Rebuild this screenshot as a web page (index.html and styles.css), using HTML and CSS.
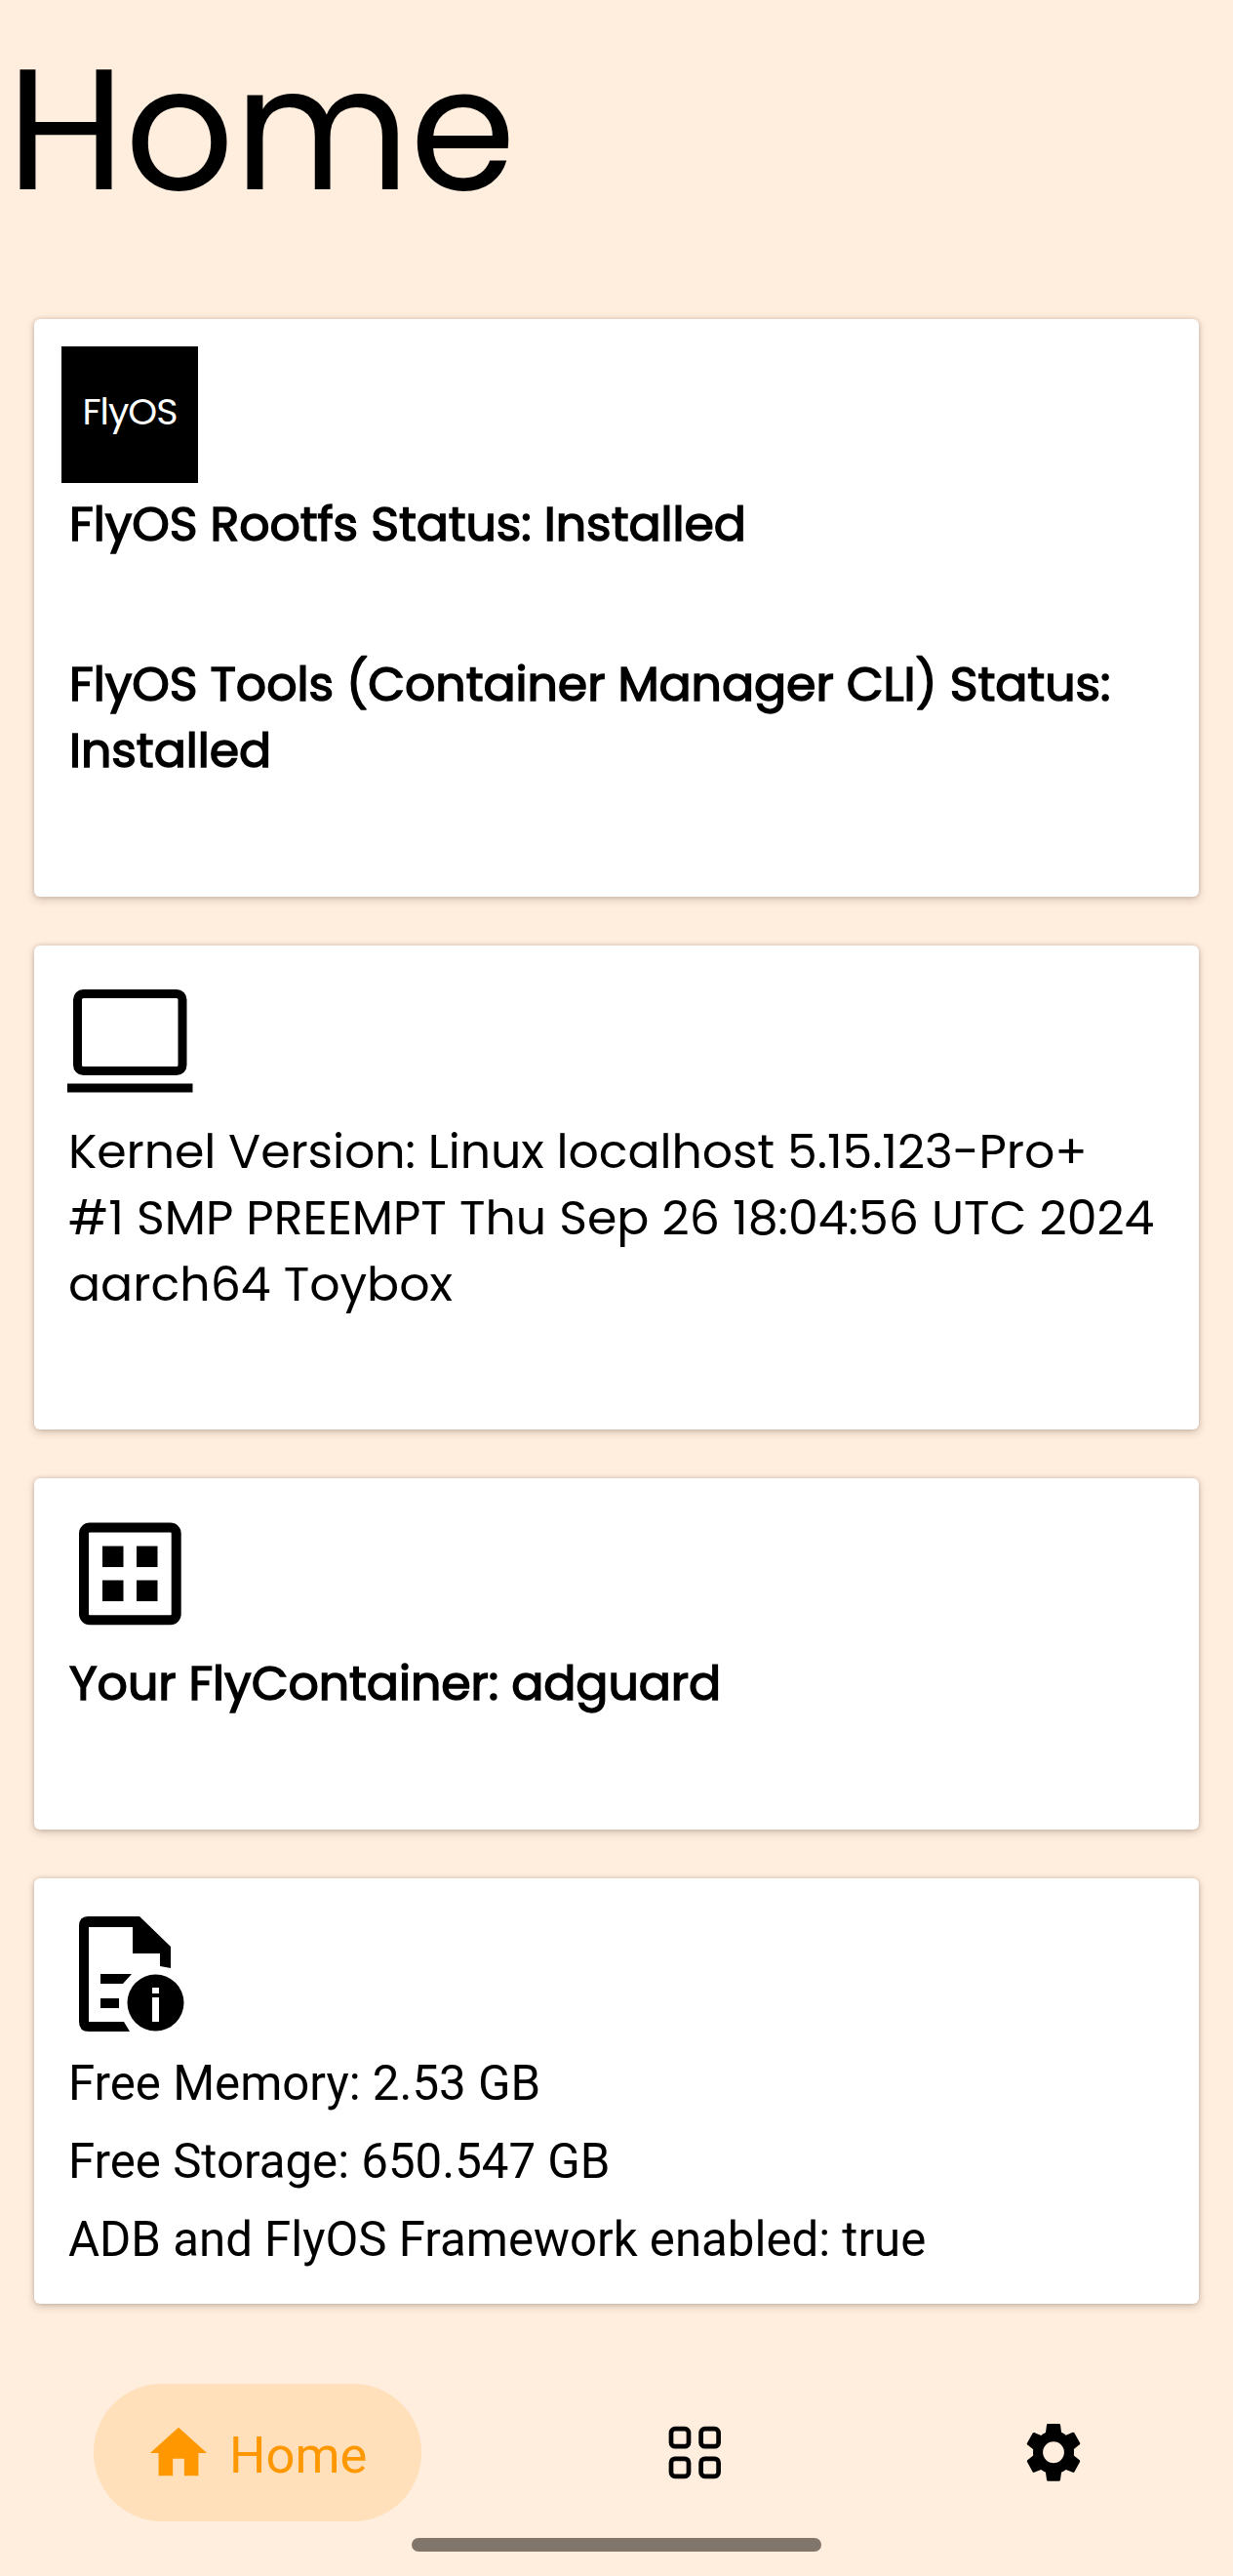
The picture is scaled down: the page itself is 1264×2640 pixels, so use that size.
FILE: index.html
```html
<!DOCTYPE html>
<html lang="en">
<head>
<meta charset="utf-8">
<title>Home</title>
<link rel="stylesheet" href="styles.css">
</head>
<body>
<main class="screen">
  <h1 class="title">Home</h1>
  <section class="card card-status">
    <div class="logo"><span>FlyOS</span></div>
    <p class="text strong rootfs">FlyOS Rootfs Status: Installed</p>
    <p class="text strong tools">FlyOS Tools (Container Manager CLI) Status:<br>Installed</p>
  </section>
  <section class="card card-kernel">
    <svg class="icon" viewBox="0 8.500 140 140"><rect x="16.500" y="30" width="107.500" height="79" rx="6" fill="none" stroke="#000" stroke-width="9"/><path d="M6 122h128.500v9H6z"/></svg>
    <p class="text kernel"><span class="k1">Kernel Version: Linux localhost 5.15.123-Pro+</span><br>#1 SMP PREEMPT Thu Sep 26 18:04:56 UTC 2024<br>aarch64 Toybox</p>
  </section>
  <section class="card card-container">
    <svg class="icon" viewBox="0 9 140 140"><rect x="23" y="31.500" width="94.700" height="94.700" rx="6" fill="none" stroke="#000" stroke-width="10"/><path d="M42 50.500h21.500V72H42zM77 50.500h21.500V72H77zM42 85.500h21.500V107H42zM77 85.500h21.500V107H77z"/></svg>
    <p class="text strong container">Your FlyContainer: adguard</p>
  </section>
  <section class="card card-info">
    <svg class="icon" viewBox="0 9 140 140"><path d="M27 20H80L112 51V73L101 71V58H73V31H28V128H64L70 138H28Q18 138 18 128V30Q18 20 27 20Z"/><path d="M40 79H72L63 89H40zM40 104H59V114H40z"/><circle cx="96.500" cy="108.500" r="29"/><path d="M93 93h7v6h-7zM93 103h7v25h-7z" fill="#fff"/></svg>
    <div class="info">
      <p>Free Memory: 2.53 GB</p>
      <p>Free Storage: 650.547 GB</p>
      <p>ADB and FlyOS Framework enabled: true</p>
    </div>
  </section>
  <nav class="nav">
    <a class="tab active"><svg class="tab-icon home-icon" viewBox="0 0 24 24"><path d="M10 20v-6h4v6h5v-8h3L12 3 2 12h3v8z"/></svg><span>Home</span></a>
    <a class="tab"><svg class="tab-icon" viewBox="0.700 0.500 70 70"><g fill="none" stroke="#000" stroke-width="4.700"><rect x="10.700" y="10.700" width="18" height="18" rx="4"/><rect x="41.300" y="10.700" width="18" height="18" rx="4"/><rect x="10.700" y="41.300" width="18" height="18" rx="4"/><rect x="41.300" y="41.300" width="18" height="18" rx="4"/></g></svg></a>
    <a class="tab"><svg class="tab-icon" viewBox="0 0 24 24"><path transform="translate(.14 -.25) scale(.96 1)" fill-rule="evenodd" d="M12 15.750a3.900 3.750 0 1 1 0-7.500 3.900 3.750 0 0 1 0 7.500zm7.430-2.680c.04-.32.070-.64.070-1.070s-.03-.75-.07-1.080l2.110-1.630c.19-.15.24-.42.12-.64l-2-3.460c-.12-.22-.39-.31-.61-.22l-2.490 1c-.52-.39-1.060-.73-1.690-.98l-.37-2.650A.506.506 0 0 0 14 2h-4c-.25 0-.46.180-.5.420l-.37 2.650c-.63.250-1.170.590-1.690.98l-2.490-1c-.22-.09-.49 0-.61.220l-2 3.460c-.13.220-.07.490.12.640l2.110 1.630c-.04.330-.07.650-.07 1s.03.750.070 1.070l-2.110 1.660c-.19.150-.25.420-.12.640l2 3.460c.12.220.39.300.61.220l2.490-1.010c.52.400 1.060.740 1.690.990l.37 2.650c.04.240.25.420.5.420h4c.25 0 .46-.18.5-.42l.37-2.650c.63-.26 1.170-.59 1.690-.99l2.490 1.010c.22.080.49 0 .61-.22l2-3.460c.12-.22.070-.49-.12-.64z"/></svg></a>
  </nav>
  <div class="handle"></div>
</main>
</body>
</html>
```
FILE: styles.css
```css
* { box-sizing: border-box; }
body { margin: 0; background: #ffedde; color: #000; }
.screen { height: 2640px; display: flex; flex-direction: column; overflow: hidden; }
h1, p { margin: 0; }
.title { font: 400 175px/200px Poppins, Inter, sans-serif; height: 294px; padding: 33px 0 0 7px; margin-bottom: 33px; white-space: nowrap; }
.card { margin: 0 35px 50px; padding: 28px; background: #fff; border-radius: 6px; box-shadow: 0 3px 9px rgba(70, 50, 30, .22), 0 0 4px rgba(70, 50, 30, .2); flex: none; }
.card-status { height: 592px; }
.card-kernel { height: 496px; }
.card-container { height: 360px; }
.card-info { height: 436px; margin-bottom: 0; }
.logo { width: 140px; height: 140px; background: #000; color: #fff; display: flex; align-items: center; justify-content: center; padding-bottom: 6px; font: 400 38px/50px Poppins, Inter, sans-serif; letter-spacing: -1px; }
.icon { display: block; width: 140px; height: 140px; }
.text { font: 400 49px/68px Poppins, Inter, sans-serif; padding: 9px 0 0 7px; white-space: nowrap; }
.strong { padding: 8px 0 0 8px; letter-spacing: -.05px; -webkit-text-stroke: 1.5px #000; }
.tools { padding-top: 96px; }
.k1 { letter-spacing: -.11px; }
.info { font: 400 49.2px/80px Roboto, sans-serif; padding: 2px 0 0 7px; white-space: nowrap; }
.nav { display: flex; margin: 82px 0 0 96px; height: 141px; flex: none; }
.tab { display: flex; align-items: center; width: 70px; margin-left: 246px; }
.tab + .tab + .tab { margin-left: 298px; }
.active { width: 336px; margin-left: 0; padding-left: 52px; border-radius: 70px; background: #ffe0ba; color: #ff9800; font: 400 52.5px/70px Roboto, sans-serif; }
.active span { padding-top: 4px; }
.tab-icon { width: 70px; height: 70px; flex: none; }
.home-icon { fill: #ff9800; margin-right: 17px; }
.handle { width: 420px; height: 14px; margin: 17px auto 0; border-radius: 7px; background: #80766c; flex: none; }
```
